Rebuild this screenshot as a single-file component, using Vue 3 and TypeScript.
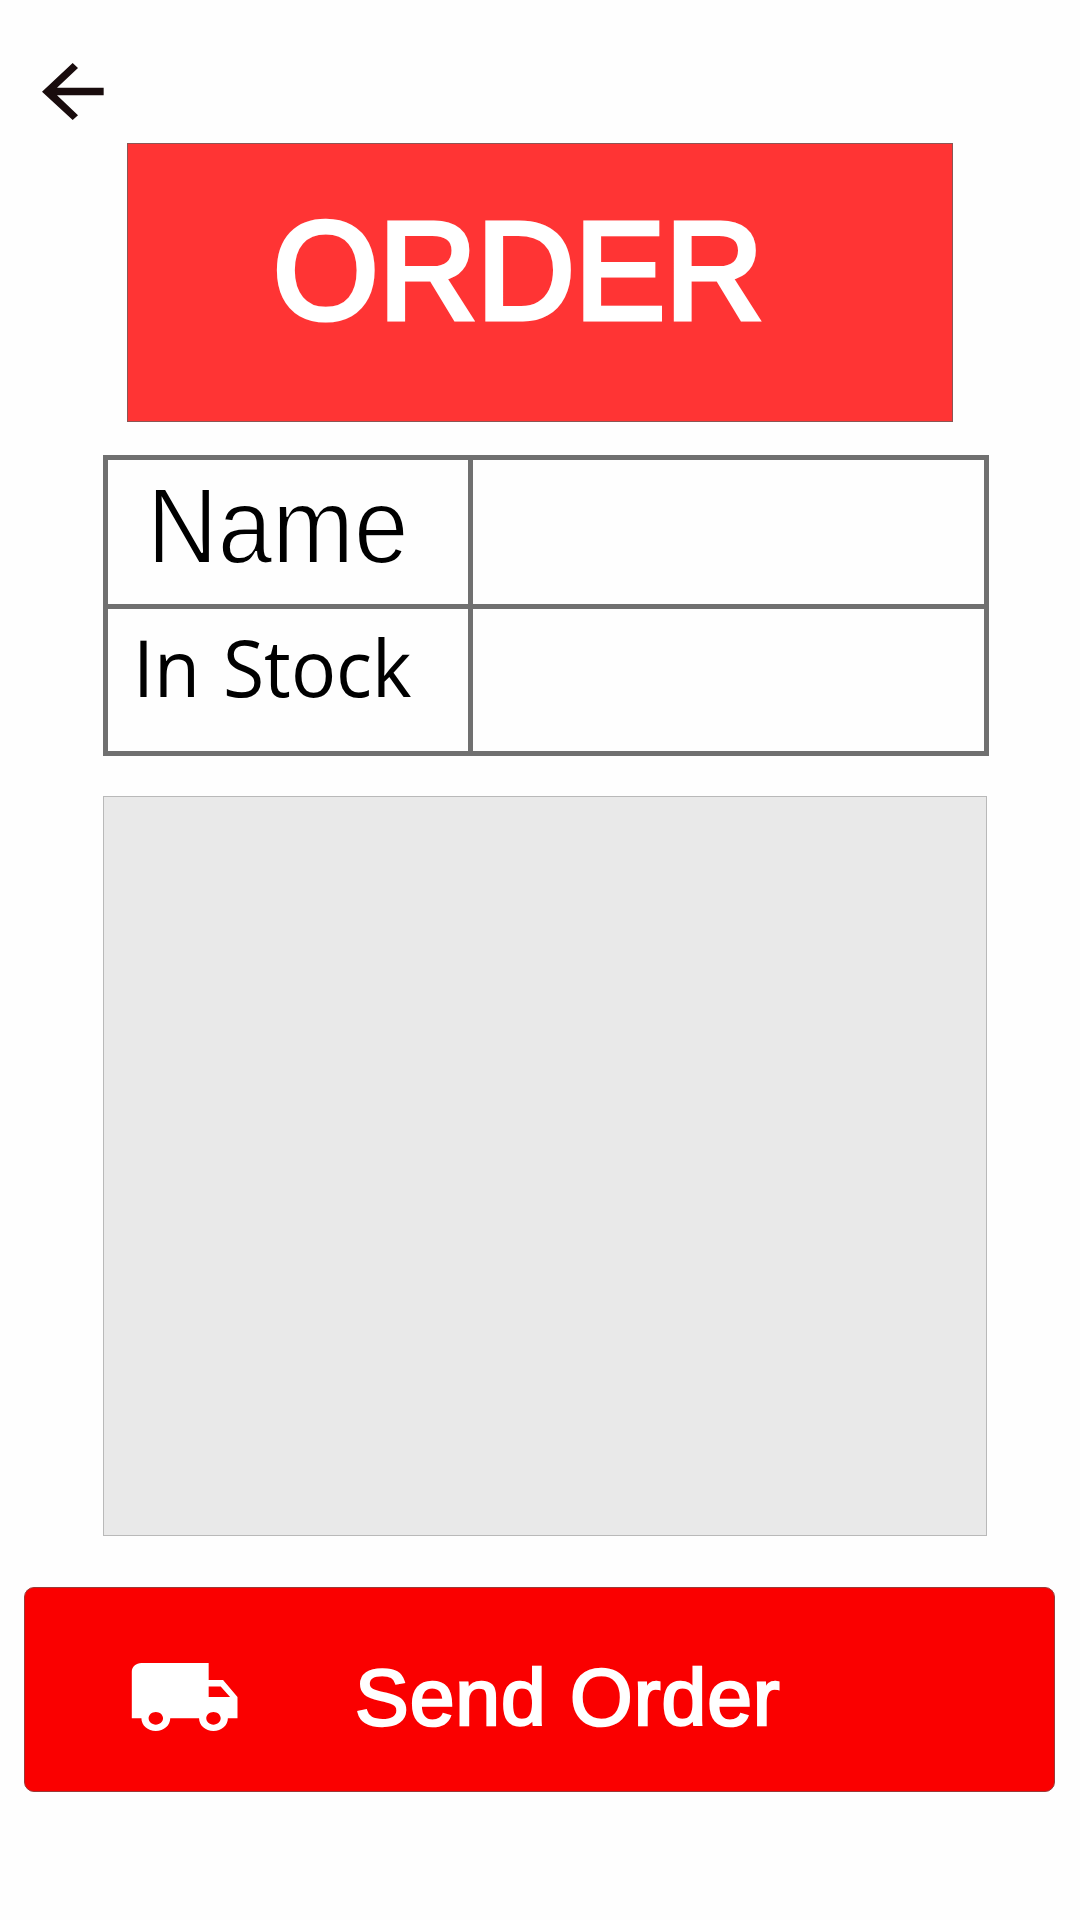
<script setup lang="ts">
interface Field {
  label: string
  style: string
  value: string
}

const fields: Field[] = [
  { label: 'Name', style: 'name', value: '' },
  { label: 'In Stock', style: 'stock', value: '' },
]
</script>

<template>
  <main class="screen">
    <svg class="back" viewBox="66 68 186 171" role="img" aria-label="Back">
      <path d="M66 154 158 68 174 83 111 142H251V165H111L174 225 158 239Z" />
    </svg>

    <header class="banner"><h1 class="title">ORDER</h1></header>

    <section class="table">
      <div v-for="field in fields" :key="field.label" class="row">
        <div class="cell head"><span class="label" :class="field.style">{{ field.label }}</span></div>
        <div class="cell">{{ field.value }}</div>
      </div>
    </section>

    <section class="panel"></section>

    <button class="send" type="button">
      <svg class="truck" viewBox="0 0 24 24" preserveAspectRatio="none">
        <path
          fill-rule="evenodd"
          d="M20 8h-3V4H3c-1.1 0-2 .9-2 2v11h2c0 1.66 1.34 3 3 3s3-1.34 3-3h6c0 1.66 1.34 3 3 3s3-1.34 3-3h2v-5l-3-4zM6 18.5c-.83 0-1.5-.67-1.5-1.5s.67-1.5 1.5-1.5 1.5.67 1.5 1.5-.67 1.5-1.5 1.5zm13.5-9 1.96 2.5H17V9.5h2.5zm-1.5 9c-.83 0-1.5-.67-1.5-1.5s.67-1.5 1.5-1.5 1.5.67 1.5 1.5-.67 1.5-1.5 1.5z"
        />
      </svg>
      <span class="send-text">Send Order</span>
    </button>
  </main>
</template>

<style>
body {
  background: #fefefe;
}
</style>

<style scoped>
* {
  box-sizing: border-box;
}

.screen {
  display: flex;
  flex-direction: column;
  align-items: flex-start;
  width: 1080px;
  height: 1920px;
  padding-top: 62.7px;
  overflow: hidden;
  background: #fefefe;
  font-family: 'Liberation Sans', Arial, sans-serif;
}

.back {
  flex: none;
  width: 62px;
  height: 57px;
  margin-left: 42px;
  fill: #190c0d;
}

.banner {
  flex: none;
  width: 826px;
  height: 279px;
  margin: 23.3px 0 0 127px;
  padding: 58.5px 0 0 144.5px;
  border: 1px solid #8b5654;
  background: #ff3434;
}

.title {
  margin: 0;
  width: max-content;
  color: #fff;
  font-size: 139px;
  font-weight: 400;
  line-height: 138px;
  transform: scaleX(0.977);
  transform-origin: 0 0;
  -webkit-text-stroke: 5.2px #fff;
}

.table {
  flex: none;
  width: 886px;
  height: 301px;
  margin: 33px 0 0 103px;
  border: 5px solid #707070;
}

.row {
  display: flex;
  height: 144px;
}

.row + .row {
  height: 147px;
  border-top: 5px solid #707070;
}

.cell {
  flex: 1;
}

.head {
  flex: none;
  width: 365px;
  border-right: 5px solid #707070;
}

.label {
  display: block;
  width: max-content;
  color: #000;
  transform-origin: 0 0;
}

.name {
  margin-left: 39px;
  padding-top: 11px;
  font-size: 107.5px;
  line-height: 110px;
  transform: scaleX(0.912);
  -webkit-text-stroke: 2px #fefefe;
}

.stock {
  margin-left: 24.5px;
  padding-top: 18.5px;
  font-family: 'Open Sans', 'Noto Sans', sans-serif;
  font-size: 78.5px;
  line-height: 80px;
  word-spacing: 3.5px;
  transform: scaleX(0.957);
}

.panel {
  flex: none;
  width: 884px;
  height: 740px;
  margin: 40px 0 0 103px;
  border: 1px solid #b9b9b9;
  background: #e9e9e9;
}

.send {
  flex: none;
  display: flex;
  align-items: flex-start;
  width: 1031px;
  height: 205px;
  margin: 51px 0 0 24px;
  padding: 0 0 0 102.2px;
  border: 1px solid #9a3a38;
  border-radius: 10px;
  background: #fa0000;
  color: #fff;
  font-family: inherit;
}

.truck {
  flex: none;
  width: 115.3px;
  height: 102px;
  margin-top: 58px;
  fill: #fff;
}

.send-text {
  margin: 69.5px 0 0 112.5px;
  font-size: 80.5px;
  line-height: 80px;
  letter-spacing: 0.95px;
  white-space: nowrap;
  -webkit-text-stroke: 2.5px #fff;
}
</style>
